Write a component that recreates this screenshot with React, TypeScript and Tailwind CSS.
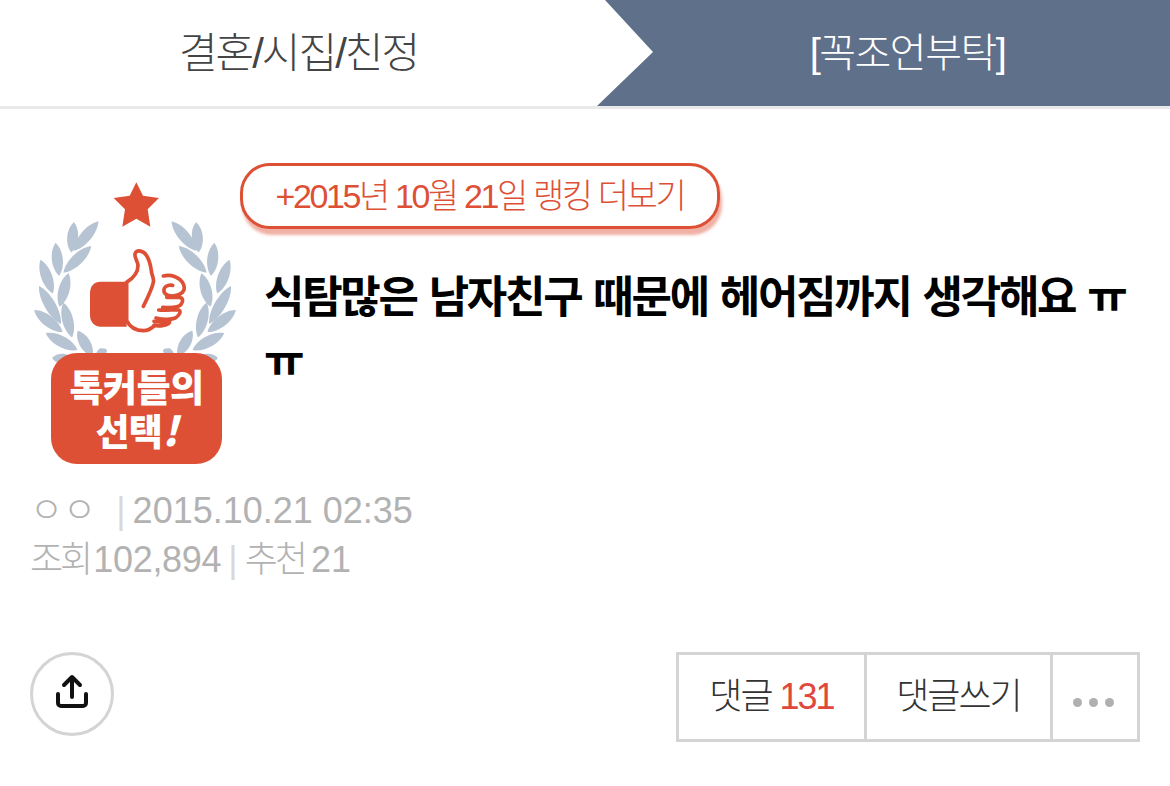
const sans = "font-['Liberation_Sans','Noto_Sans_CJK_KR',sans-serif]";

// leaf centre, half length and tilt, measured off the 3x crop of the badge
const leaves = [
  { x: 258, y: 258, rot: 40, len: 58 },
  { x: 218, y: 262, rot: 5, len: 46 },
  { x: 232, y: 328, rot: 46, len: 58 },
  { x: 172, y: 328, rot: -6, len: 50 },
  { x: 192, y: 420, rot: 15, len: 52 },
  { x: 140, y: 380, rot: -20, len: 54 },
  { x: 150, y: 465, rot: -30, len: 66 },
  { x: 203, y: 510, rot: -14, len: 54 },
  { x: 145, y: 513, rot: -52, len: 54 },
  { x: 255, y: 580, rot: -30, len: 44 },
  { x: 185, y: 575, rot: -62, len: 54 },
  { x: 190, y: 628, rot: -82, len: 34 },
  { x: 305, y: 606, rot: -20, len: 12 },
];

const Laurel = () => (
  <>
    {leaves.map((l, i) => (
      <path
        key={i}
        d={`M0 ${-l.len}C22 ${-l.len / 2} 22 ${l.len / 2} 0 ${l.len}C-22 ${l.len / 2} -22 ${-l.len / 2} 0 ${-l.len}Z`}
        transform={`translate(${l.x} ${l.y}) rotate(${l.rot})`}
        fill="#b5c3d3"
      />
    ))}
  </>
);

const TalkerBadge = () => (
  <div className="relative h-[301px] w-[236px] shrink-0">
    <svg width="236" height="301" viewBox="0 39 708 903" className="block">
      <path d="M409 97l20 40 48 7-34 34 8 52-42-24-42 24 8-52-34-34 48-7z" fill="#dd5035" />
      <Laurel />
      <g transform="translate(810 0) scale(-1 1)">
        <Laurel />
      </g>
      <path d="M380 395h-78c-20 0-32 14-32 34v66c0 20 12 35 32 35h78z" fill="#dd5035" />
      <g fill="none" stroke="#dd5035" strokeWidth="11" strokeLinecap="round" strokeLinejoin="round">
        <path d="M380 397c18-12 34-30 34-50 0-14-14-26-8-38 6-10 24-8 34 8 14 22 12 42 16 56 3 10 6 14 4 24-3 14-12 36-30 72" />
        <path d="M380 400v112c10 20 30 30 50 30 16 0 26-8 34-16" />
        <path d="M490 378c24-6 50 4 60 24 8 18-2 34-34 36-16 0-26-8-24-20 2-10 14-14 26-12" />
        <path d="M500 442h36c14 0 14 12 8 20-6 10-30 12-56 10" />
        <path d="M476 480c22 2 50-2 60 0 10 4 0 18-10 24-10 4-34 6-58 0" />
        <path d="M462 514c14 4 34 0 46 0 4 4-6 10-18 12-10 2-20 2-28 0" />
      </g>
    </svg>
    <div className="absolute left-[51px] top-[190px] flex h-[111px] w-[171px] flex-col items-center justify-center rounded-[26px] bg-[#dd5035] font-['Noto_Sans_CJK_KR',sans-serif] text-[37px] font-black leading-[43px] tracking-[-0.6px] text-white">
      <span>톡커들의</span>
      <span>
        선택<i className="text-[40px]">!</i>
      </span>
    </div>
  </div>
);

const App = () => {
  return (
    <div className={`h-[786px] w-[1170px] overflow-hidden bg-white ${sans}`}>
      <header className="flex h-[109px] border-b-[3px] border-[#e9e9e9]">
        <div className="flex w-[597px] items-center justify-center text-[42px] font-light tracking-[-2px] text-[#444]">
          결혼/시집/친정
        </div>
        <div className="flex flex-1 items-center justify-center bg-[#5f708a] pl-[48px] text-[40px] font-light tracking-[-1.5px] text-white [clip-path:polygon(8px_0,100%_0,100%_100%,0_100%,56px_52px)]">
          [꼭조언부탁]
        </div>
      </header>

      <section className="flex pr-[30px] pt-[54px]">
        <TalkerBadge />
        <div className="ml-[4px] min-w-0 flex-1">
          <a className="flex h-[66px] w-[480px] items-center justify-center rounded-[30px] border-[3px] border-[#dd5035] text-[34px] font-light tracking-[-2.4px] text-[#dd5035] shadow-[2px_6px_3px_rgba(221,80,53,0.45)]">
            +2015년 10월 21일 랭킹 더보기
          </a>
          <h1 className="ml-[24px] mt-[37px] text-[44px] font-bold leading-[64px] tracking-[-2.3px] text-black [word-spacing:2px]">
            식탐많은 남자친구 때문에 헤어짐까지 생각해요 ㅠㅠ
          </h1>
        </div>
      </section>

      <div className="mt-[23px] pl-[30px] text-[36px] font-light leading-[48px] text-[#b2b2b2]">
        <div>
          ㅇㅇ<span className="ml-[20px] mr-[7px] text-[#d8d8d8]">|</span>
          <span>2015.10.21 02:35</span>
        </div>
        <div className="mt-[1px]">
          <span className="tracking-[-3px]">조회</span>
          <span className="ml-[3px] tracking-[-0.3px]">102,894</span>
          <span className="mx-[7px] text-[#d8d8d8]">|</span>
          <span className="tracking-[-3px]">추천</span>
          <span className="ml-[6px]">21</span>
        </div>
      </div>

      <footer className="mt-[68px] flex items-start justify-between px-[30px]">
        <button className="flex h-[84px] w-[84px] items-center justify-center rounded-full border-[3px] border-[#d4d4d4]">
          <svg width="38" height="38" viewBox="0 2 38 38" fill="none" stroke="#111" strokeWidth="4" strokeLinecap="round" strokeLinejoin="round" className="overflow-visible">
            <path d="M19 24V5M11 12l8-8 8 8M5 21v9a3 3 0 0 0 3 3h22a3 3 0 0 0 3-3v-9" />
          </svg>
        </button>
        <div className="flex h-[90px] border-[3px] border-[#d4d4d4] text-[36px] font-light tracking-[-2px] text-[#333]">
          <button className="w-[188px] border-r-[3px] border-[#d4d4d4]">
            댓글 <span className="text-[#e0483c]">131</span>
          </button>
          <button className="w-[186px] border-r-[3px] border-[#d4d4d4]">댓글쓰기</button>
          <button className="flex w-[84px] items-center justify-center gap-[7px] pr-[4px] pt-[10px]">
            <span className="h-[9px] w-[9px] rounded-full bg-[#b0b0b0]" />
            <span className="h-[9px] w-[9px] rounded-full bg-[#b0b0b0]" />
            <span className="h-[9px] w-[9px] rounded-full bg-[#b0b0b0]" />
          </button>
        </div>
      </footer>
    </div>
  );
};

export default App;
